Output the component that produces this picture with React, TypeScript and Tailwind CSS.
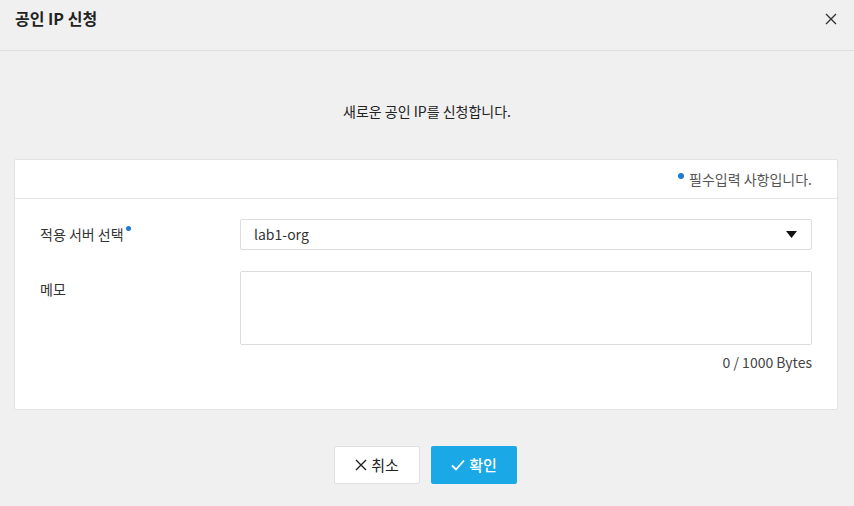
import React from "react";

const font = { fontFamily: '"Noto Sans CJK KR", "Noto Sans", sans-serif' };

function CloseIcon({ className }: { className?: string }) {
  return (
    <svg viewBox="0 0 12 12" className={className} fill="none" stroke="currentColor" strokeWidth="1.4">
      <path d="M1 1L11 11M11 1L1 11" />
    </svg>
  );
}

function CheckIcon({ className }: { className?: string }) {
  return (
    <svg viewBox="0 0 14 12" className={className} fill="none" stroke="currentColor" strokeWidth="1.8">
      <path d="M1 6.5L5 10.5L13 1.5" />
    </svg>
  );
}

export default function App() {
  return (
    <div className="w-[854px] h-[506px] bg-[#f0f0f0] text-[#333] overflow-hidden" style={font}>
      {/* header */}
      <div className="h-[51px] flex items-center justify-between pl-[15px] pr-[17px] border-b border-[#dedede]">
        <h1 className="text-[16px] font-bold text-[#222] -mt-[14px]">공인 IP 신청</h1>
        <button className="text-[#333] -mt-[13px]">
          <CloseIcon className="w-[12px] h-[12px]" />
        </button>
      </div>

      <p className="pt-[50px] text-center text-[14px] leading-5 text-[#222]">새로운 공인 IP를 신청합니다.</p>

      <div className="mt-[38px] ml-[14px] mr-[16px] bg-white border border-[#e2e2e2] rounded-[2px] h-[251px]">
        <div className="h-[39px] border-b border-[#e6e6e6] flex items-center justify-end pr-[25px] text-[14px] text-[#555]">
          <span className="w-[6px] h-[6px] rounded-full bg-[#1e7ad2] mr-[5px] -mt-[6px]" />
          필수입력 사항입니다.
        </div>

        <div className="px-[25px] pt-[20px]">
          <div className="flex items-center">
            <div className="w-[200px] text-[14px] text-[#333] flex items-start">
              적용 서버 선택
              <span className="w-[5px] h-[5px] rounded-full bg-[#1e7ad2] ml-[2px] mt-[2px]" />
            </div>
            <div className="flex-1 h-[31px] border border-[#dcdcdc] rounded-[2px] flex items-center justify-between pl-[13px] pr-[14px] text-[14px] text-[#333]">
              <span>lab1-org</span>
              <svg viewBox="0 0 11 7" className="w-[11px] h-[7px]">
                <path d="M0 0H11L5.5 7Z" fill="#111" />
              </svg>
            </div>
          </div>

          <div className="flex mt-[21px]">
            <div className="w-[200px] text-[14px] text-[#333] pt-[8px]">메모</div>
            <div className="flex-1">
              <textarea className="block w-full h-[74px] border border-[#dcdcdc] rounded-[2px] resize-none outline-none" />
              <div className="text-right text-[14px] text-[#444] mt-[9px] leading-4">0 / 1000 Bytes</div>
            </div>
          </div>
        </div>
      </div>

      <div className="flex justify-center gap-[11px] mt-[36px] pr-[3px]">
        <button className="w-[86px] h-[38px] bg-white border border-[#e0e0e0] rounded-[2px] flex items-center justify-center gap-[4px] text-[15px] text-[#222]">
          <CloseIcon className="w-[12px] h-[12px]" />
          취소
        </button>
        <button className="w-[86px] h-[38px] bg-[#1ba8e6] rounded-[2px] flex items-center justify-center gap-[4px] text-[15px] text-white font-medium">
          <CheckIcon className="w-[14px] h-[12px]" />
          확인
        </button>
      </div>
    </div>
  );
}
